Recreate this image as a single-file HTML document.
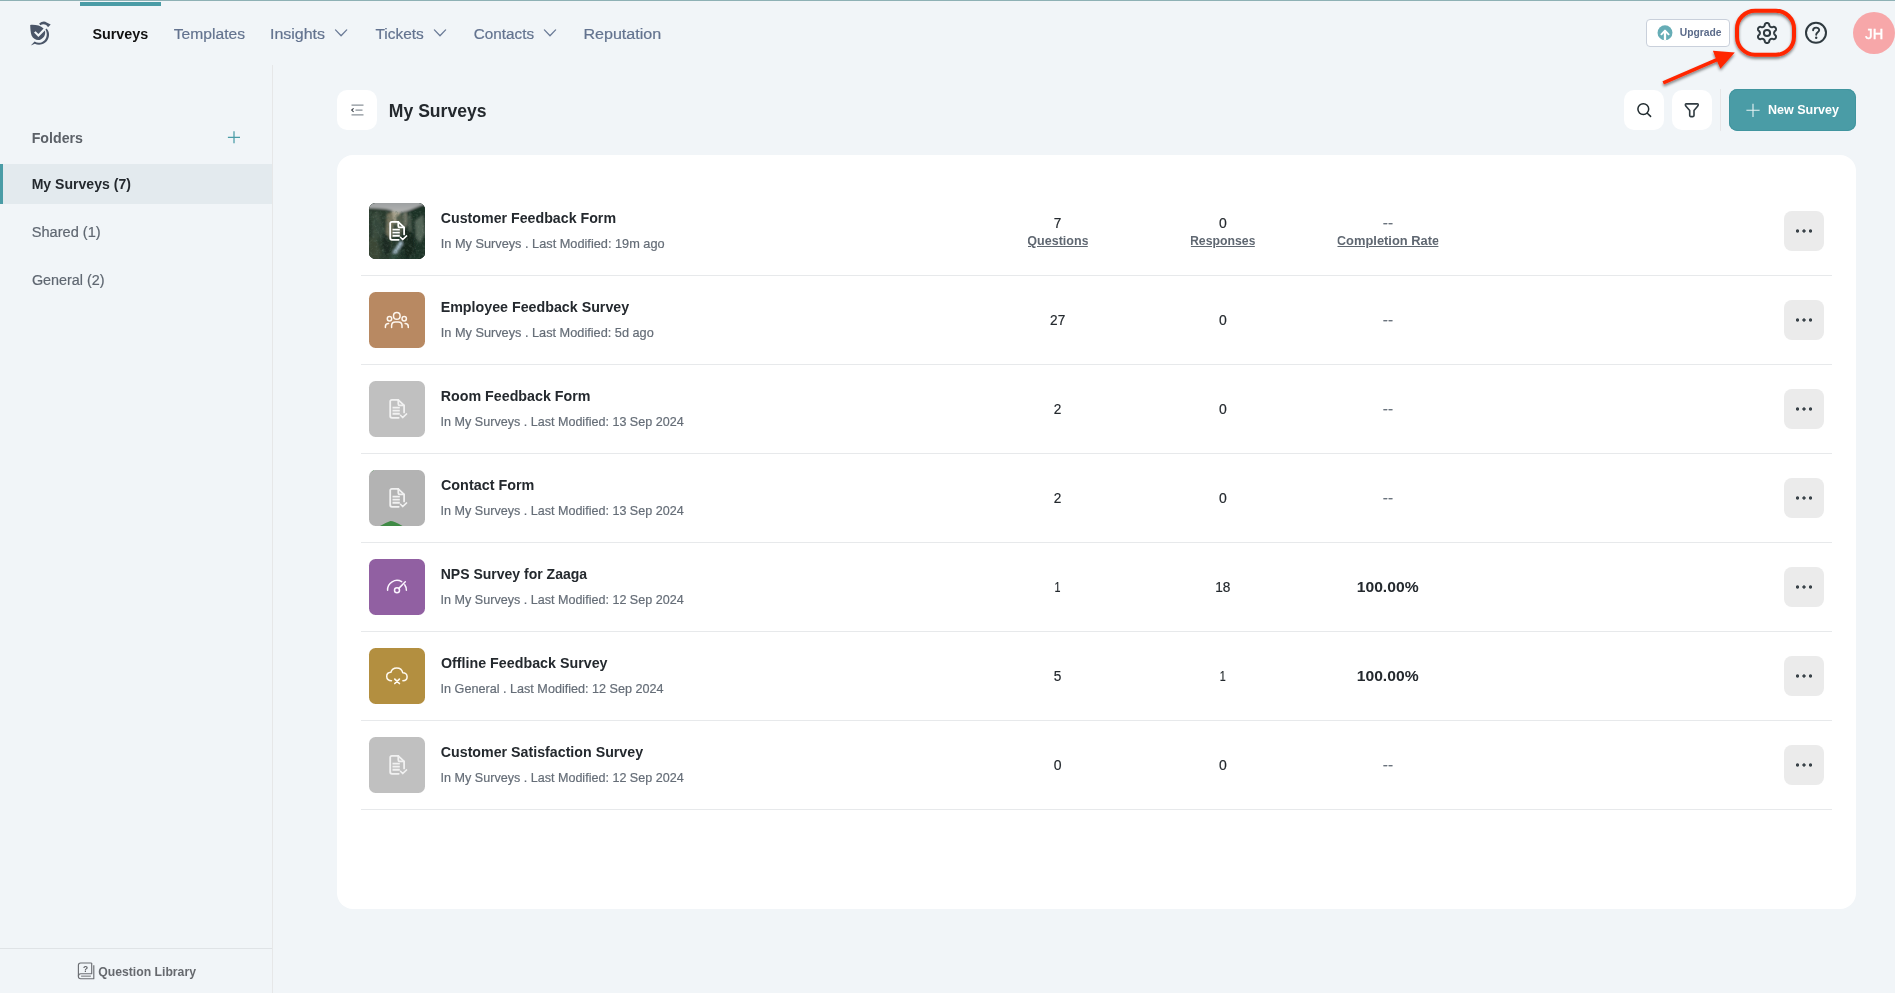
<!DOCTYPE html>
<html lang="en"><head><meta charset="utf-8"><title>My Surveys</title>
<style>
*{box-sizing:border-box;margin:0;padding:0}
html,body{width:1895px;height:993px;overflow:hidden;background:#f1f5f8;font-family:"Liberation Sans",sans-serif}
body{opacity:.999}
.abs{position:absolute}
.t{position:absolute;white-space:pre;line-height:1;transform-origin:0 50%;text-underline-offset:.5px;text-decoration-thickness:1px}
header{position:absolute;left:0;top:0;width:1895px;height:66px}
.topline{position:absolute;left:0;top:0;width:1895px;height:1px;background:#8eb1b5}
.bar{position:absolute;left:80px;top:2px;width:81px;height:4px;background:#4a9ca6}
.upg{position:absolute;left:1646px;top:19px;width:84px;height:28px;background:#fff;border:1px solid #c9d0db;border-radius:4px}
.avatar{position:absolute;left:1853px;top:12px;width:42px;height:42px;border-radius:50%;background:#f7a7a9}
aside{position:absolute;left:0;top:0;width:273px;height:993px}
aside::after{content:"";position:absolute;left:272px;top:65px;width:1px;height:928px;background:#e6e7e8}
.active{position:absolute;left:0;top:164px;width:272px;height:40px;background:#e3eaee;border-left:3px solid #4a9ca6}
.ql{position:absolute;left:0;top:948px;width:272px;height:1px;background:#dfe3e6}
.ibtn{position:absolute;top:90px;width:40px;height:40px;background:#fff;border-radius:10px}
.vdiv{position:absolute;left:1720px;top:89px;width:1px;height:42px;background:#e6e6e8}
.newbtn{position:absolute;left:1729px;top:89px;width:127px;height:42px;background:#4a9ca6;border-radius:8.5px;box-shadow:inset 0 0 0 1px #41959f}
.card{position:absolute;left:337px;top:155px;width:1519px;height:754px;background:#fff;border-radius:16px}
.tile{position:absolute;left:369px;width:56px;height:56px;border-radius:6.5px;overflow:hidden}
.more{position:absolute;left:1784px;width:40px;height:40px;border-radius:8px;background:radial-gradient(circle at 13.5px 20px,#3a4349 1.25px,rgba(58,67,73,0) 2.05px),radial-gradient(circle at 20px 20px,#3a4349 1.25px,rgba(58,67,73,0) 2.05px),radial-gradient(circle at 26.5px 20px,#3a4349 1.25px,rgba(58,67,73,0) 2.05px),#ebebeb}
.hr{position:absolute;left:361px;width:1471px;height:1px;background:#e7e9eb}
</style></head>
<body>
<header>
<div class="topline"></div>
<div class="bar"></div>
<svg class="abs" style="left:28px;top:21px" width="26" height="28" viewBox="0 0 26 28"><g fill="#4a5568">
<path d="M2.2 3.9 C7.5 3.6 12.3 4.3 15.6 7.6 L10.4 12.9 L7.6 10.2 L6 11.6 L10.4 16.1 L16.9 9.6 C18 13.6 16 17.6 11.6 18.9 C8.6 19.6 5.2 18 3.6 14.6 C2.6 11.6 2.3 7.6 2.2 3.9 Z"/>
<path d="M11.2 2.6 C13.6 0.6 16.6 -0.2 18.6 1.6 L22.7 3.5 L20 6.2 C18.6 3.4 15.6 2.4 12.2 4.2 Z"/>
<path d="M18.6 7.4 C22.6 11.6 21.6 18.6 16.6 22.1 C13.2 24.4 9.4 24.1 6.8 22.8 L2.8 24.6 L6.6 20.6 C10 22.6 14 22 16.6 19.2 C19.3 16.2 19.4 11.8 17.4 8.6 Z"/>
</g></svg>
<nav>
<span class="t" style="left:92px;top:26.00px;font-size:15.04px;font-weight:700;color:#111111;transform:translateX(0.38px) scaleX(0.9569)">Surveys</span><span class="t" style="left:173px;top:26.00px;font-size:15.04px;font-weight:400;color:#63738f;-webkit-text-stroke:.2px;transform:translateX(0.75px) scaleX(1.0402)">Templates</span><span class="t" style="left:269px;top:26.00px;font-size:15.04px;font-weight:400;color:#63738f;-webkit-text-stroke:.2px;transform:translateX(0.94px) scaleX(1.0641)">Insights</span><span class="t" style="left:375px;top:26.00px;font-size:15.04px;font-weight:400;color:#63738f;-webkit-text-stroke:.2px;transform:translateX(0.38px) scaleX(1.0297)">Tickets</span><span class="t" style="left:473px;top:26.00px;font-size:15.04px;font-weight:400;color:#63738f;-webkit-text-stroke:.2px;transform:translateX(0.78px) scaleX(1.0154)">Contacts</span><span class="t" style="left:583px;top:26.00px;font-size:15.04px;font-weight:400;color:#63738f;-webkit-text-stroke:.2px;transform:translateX(0.41px) scaleX(1.0703)">Reputation</span>
<svg class="abs" style="left:334px;top:28px" width="15" height="11" viewBox="-0.1 -0.2 15 11"><path d="M1.4 1.7 L7 7.6 L12.6 1.7" fill="none" stroke="#6b7b97" stroke-width="1.3" stroke-linecap="round" stroke-linejoin="round"/></svg><svg class="abs" style="left:433px;top:28px" width="15" height="11" viewBox="0 -0.2 15 11"><path d="M1.4 1.7 L7 7.6 L12.6 1.7" fill="none" stroke="#6b7b97" stroke-width="1.3" stroke-linecap="round" stroke-linejoin="round"/></svg><svg class="abs" style="left:543px;top:28px" width="15" height="11" viewBox="0 -0.2 15 11"><path d="M1.4 1.7 L7 7.6 L12.6 1.7" fill="none" stroke="#6b7b97" stroke-width="1.3" stroke-linecap="round" stroke-linejoin="round"/></svg>
</nav>
<div class="upg"></div>
<svg class="abs" style="left:1657px;top:25px" width="16" height="16" viewBox="-0.5 -0.3 16 16"><circle cx="7.5" cy="7.5" r="7.45" fill="#66adb6"/><path d="M7.5 15 V5.6" fill="none" stroke="#fff" stroke-width="2.3"/><path d="M3.9 9 L7.5 5.3 L11.1 9" fill="none" stroke="#fff" stroke-width="1.9" stroke-linecap="round" stroke-linejoin="round"/></svg>
<span class="t" style="left:1679px;top:27.00px;font-size:10.53px;font-weight:700;color:#5b6b8a;transform:translateX(0.71px) scaleX(0.9810)">Upgrade</span>
<svg class="abs" style="left:1755px;top:21px" width="24" height="24" viewBox="1755 21 24 24" fill="none" stroke="#2f3a40" stroke-width="2" stroke-linejoin="round"><path d="M1774.10 33.00 L1774.11 32.75 L1774.16 32.50 L1774.23 32.24 L1774.34 31.97 L1774.48 31.68 L1774.66 31.37 L1774.93 31.02 L1775.58 30.54 L1775.81 30.14 L1775.93 29.75 L1775.98 29.37 L1775.98 29.00 L1775.92 28.65 L1775.81 28.31 L1775.66 28.00 L1775.46 27.71 L1775.23 27.45 L1774.95 27.22 L1774.64 27.03 L1774.28 26.89 L1773.89 26.80 L1773.42 26.80 L1772.68 27.12 L1772.24 27.18 L1771.88 27.18 L1771.56 27.16 L1771.28 27.12 L1771.01 27.05 L1770.77 26.96 L1770.55 26.85 L1770.34 26.71 L1770.15 26.55 L1769.96 26.36 L1769.78 26.13 L1769.60 25.86 L1769.42 25.55 L1769.25 25.14 L1769.16 24.34 L1768.93 23.94 L1768.65 23.64 L1768.35 23.40 L1768.03 23.23 L1767.69 23.10 L1767.35 23.03 L1767.00 23.00 L1766.65 23.03 L1766.31 23.10 L1765.97 23.23 L1765.65 23.40 L1765.35 23.64 L1765.07 23.94 L1764.84 24.34 L1764.75 25.14 L1764.58 25.55 L1764.40 25.86 L1764.22 26.13 L1764.04 26.36 L1763.85 26.55 L1763.66 26.71 L1763.45 26.85 L1763.23 26.96 L1762.99 27.05 L1762.72 27.12 L1762.44 27.16 L1762.12 27.18 L1761.76 27.18 L1761.32 27.12 L1760.58 26.80 L1760.11 26.80 L1759.72 26.89 L1759.36 27.03 L1759.05 27.22 L1758.77 27.45 L1758.54 27.71 L1758.34 28.00 L1758.19 28.31 L1758.08 28.65 L1758.02 29.00 L1758.02 29.37 L1758.07 29.75 L1758.19 30.14 L1758.42 30.54 L1759.07 31.02 L1759.34 31.37 L1759.52 31.68 L1759.66 31.97 L1759.77 32.24 L1759.84 32.50 L1759.89 32.75 L1759.90 33.00 L1759.89 33.25 L1759.84 33.50 L1759.77 33.76 L1759.66 34.03 L1759.52 34.32 L1759.34 34.63 L1759.07 34.98 L1758.42 35.46 L1758.19 35.86 L1758.07 36.25 L1758.02 36.63 L1758.02 37.00 L1758.08 37.35 L1758.19 37.69 L1758.34 38.00 L1758.54 38.29 L1758.77 38.55 L1759.05 38.78 L1759.36 38.97 L1759.72 39.11 L1760.11 39.20 L1760.58 39.20 L1761.32 38.88 L1761.76 38.82 L1762.12 38.82 L1762.44 38.84 L1762.72 38.88 L1762.99 38.95 L1763.23 39.04 L1763.45 39.15 L1763.66 39.29 L1763.85 39.45 L1764.04 39.64 L1764.22 39.87 L1764.40 40.14 L1764.58 40.45 L1764.75 40.86 L1764.84 41.66 L1765.07 42.06 L1765.35 42.36 L1765.65 42.60 L1765.97 42.77 L1766.31 42.90 L1766.65 42.97 L1767.00 43.00 L1767.35 42.97 L1767.69 42.90 L1768.03 42.77 L1768.35 42.60 L1768.65 42.36 L1768.93 42.06 L1769.16 41.66 L1769.25 40.86 L1769.42 40.45 L1769.60 40.14 L1769.78 39.87 L1769.96 39.64 L1770.15 39.45 L1770.34 39.29 L1770.55 39.15 L1770.77 39.04 L1771.01 38.95 L1771.28 38.88 L1771.56 38.84 L1771.88 38.82 L1772.24 38.82 L1772.68 38.88 L1773.42 39.20 L1773.89 39.20 L1774.28 39.11 L1774.64 38.97 L1774.95 38.78 L1775.23 38.55 L1775.46 38.29 L1775.66 38.00 L1775.81 37.69 L1775.92 37.35 L1775.98 37.00 L1775.98 36.63 L1775.93 36.25 L1775.81 35.86 L1775.58 35.46 L1774.93 34.98 L1774.66 34.63 L1774.48 34.32 L1774.34 34.03 L1774.23 33.76 L1774.16 33.50 L1774.11 33.25 Z"/><circle cx="1767" cy="33" r="3.1"/></svg>
<svg class="abs" style="left:1804px;top:21px" width="24" height="24" viewBox="1804 21 24 24" fill="none" stroke="#2f3a40" stroke-width="2" stroke-linecap="round"><circle cx="1816" cy="32.8" r="10"/><path d="M1813.1 30.2 C1813.1 26.8 1819.2 26.8 1819.2 30.1 C1819.2 32.4 1816.2 32.3 1816.2 34.8" stroke-width="1.9"/><circle cx="1816.2" cy="37.8" r="1.2" fill="#2f3a40" stroke="none"/></svg>
<div class="avatar"></div>
<span class="t" style="left:1865px;top:27.00px;font-size:14.57px;font-weight:400;color:#ffffff;-webkit-text-stroke:0.45px #fff;transform:translateX(0.37px) scaleX(1.0001)">JH</span>
</header>

<aside>
<div class="active"></div>
<span class="t" style="left:31px;top:130.00px;font-size:15.04px;font-weight:700;color:#5c6168;transform:translateX(0.67px) scaleX(0.9448)">Folders</span><span class="t" style="left:31px;top:176.00px;font-size:15.04px;font-weight:700;color:#24292e;transform:translateX(0.66px) scaleX(0.9351)">My Surveys (7)</span><span class="t" style="left:31px;top:224.00px;font-size:15.04px;font-weight:400;color:#5f6771;-webkit-text-stroke:.2px;transform:translateX(0.76px) scaleX(0.9705)">Shared (1)</span><span class="t" style="left:31px;top:272.00px;font-size:15.04px;font-weight:400;color:#5f6771;-webkit-text-stroke:.2px;transform:translateX(0.94px) scaleX(0.9557)">General (2)</span>
<svg class="abs" style="left:227px;top:130px" width="15" height="15" viewBox="0 -0.3 15 15"><path d="M7 0.9 V13 M0.9 7 H13" stroke="#4a9ca6" stroke-width="1.25" fill="none"/></svg>
<div class="ql"></div>
<svg class="abs" style="left:77px;top:962px" width="20" height="19" viewBox="-0.3 0 20 19" fill="none" stroke="#6b6e73" stroke-width="1.15" stroke-linejoin="round"><path d="M14.4 1 H3.3 Q1.1 1 1.1 3.2 V14.5 Q1.1 16.7 3.3 16.7 H16.5 V3.2"/><path d="M14.4 1 V11.7 H3.5 Q1.1 11.7 1.1 14.2"/><path d="M3.8 14.2 H13.6" stroke="#999ca0" stroke-width="1.5"/><text x="5.7" y="9.7" font-family="Liberation Sans, sans-serif" font-size="8.4" font-weight="700" fill="#5f6267" stroke="none">?</text></svg>
<span class="t" style="left:98px;top:965.00px;font-size:13.16px;font-weight:700;color:#66696e;transform:translateX(0.22px) scaleX(0.9283)">Question Library</span>
</aside>

<main>
<div class="ibtn" style="left:337px"><svg class="abs" style="left:13px;top:13px" width="14" height="14" viewBox="0 0 14 14" fill="none" stroke="#8a9299" stroke-width="1.25"><path d="M1.5 2 H13.5 M5.5 7.1 H12.5 M1.5 11.9 H13.5"/><path d="M3.6 5.4 L1.7 7.1 L3.6 8.8" stroke="#3a4148" stroke-width="1.1"/></svg></div>
<span class="t" style="left:388px;top:102.00px;font-size:18.80px;font-weight:700;color:#24292e;transform:translateX(0.86px) scaleX(0.9356)">My Surveys</span>
<div class="ibtn" style="left:1624px"><svg class="abs" style="left:11px;top:11px" width="18" height="18" viewBox="0 0 18 18" fill="none" stroke="#1f2a2e" stroke-width="1.5" stroke-linecap="round"><circle cx="8.3" cy="8.1" r="5.4"/><path d="M12.3 12.2 L15.6 15.4"/></svg></div>
<div class="ibtn" style="left:1672px"><svg class="abs" style="left:11px;top:11px" width="18" height="18" viewBox="0 0 18 18" fill="none" stroke="#2f3a40" stroke-width="1.6" stroke-linejoin="round"><path d="M3.2 2.9 H14.4 Q15.4 2.9 15.2 4 Q15 4.9 14.4 5.5 L11 9.6 V14.6 Q11 15.6 10 15.6 H7.7 Q6.7 15.6 6.7 14.6 V9.6 L3.2 5.5 Q2.6 4.9 2.4 4 Q2.2 2.9 3.2 2.9 Z"/></svg></div>
<div class="vdiv"></div>
<div class="newbtn"><svg class="abs" style="left:17px;top:14px" width="15" height="15" viewBox="0 -0.3 15 15"><path d="M7 0.4 V13.6 M0.4 7 H13.6" stroke="#e8f3f4" stroke-width="1.1" fill="none"/></svg></div>
<span class="t" style="left:1767px;top:103.00px;font-size:13.16px;font-weight:700;color:#ffffff;transform:translateX(0.88px) scaleX(0.9525)">New Survey</span>
<section class="card"></section>
<div class="row"><div class="tile" style="top:203px;background:#2c3a33"><svg class="abs" style="left:0;top:0" width="56" height="56" viewBox="0 0 56 56"><defs><filter id="bl" x="-10%" y="-10%" width="120%" height="120%"><feGaussianBlur stdDeviation="0.8"/></filter><filter id="tx" x="0" y="0" width="100%" height="100%"><feTurbulence type="fractalNoise" baseFrequency="0.3" numOctaves="3" seed="5"/><feColorMatrix type="matrix" values="0 0 0 0 0.07  0 0 0 0 0.12  0 0 0 0 0.09  0 0 0 -2.2 1.2"/></filter><filter id="tl" x="0" y="0" width="100%" height="100%"><feTurbulence type="fractalNoise" baseFrequency="0.45" numOctaves="2" seed="9"/><feColorMatrix type="matrix" values="0 0 0 0 0.55  0 0 0 0 0.6  0 0 0 0 0.52  0 0 0 2.6 -1.45"/></filter><linearGradient id="sky" x1="0" y1="0" x2="0" y2="1"><stop offset="0" stop-color="#9a9da0"/><stop offset="1" stop-color="#b6b7b4"/></linearGradient></defs>
<rect width="56" height="56" fill="#25382d"/>
<g filter="url(#bl)">
<rect x="-2" y="-2" width="60" height="13" fill="url(#sky)"/>
<path d="M-2 5 L8 5.4 L16 6 L23 7.4 L23 60 L-2 60 Z" fill="#2a3b2f"/>
<path d="M58 1 L52 2.6 L46 5 L40 7.6 L34 9 L31 9.6 L31 60 L58 60 Z" fill="#1f3128"/>
<path d="M23 8 L31 9.5 L31 16 L27 22 L23 18 Z" fill="#a7a28d"/>
<path d="M18 11 L23 9 L25 20 L24 33 L21 36 L17 30 Z" fill="#77745f"/>
<path d="M27 13 L33 11 L35 24 L31 34 L27 28 Z" fill="#535b4c"/>
<path d="M34 10 L38 9 L38 22 L35 26 Z" fill="#747869"/>
<path d="M3 11 L10 9 L13 22 L9 36 L4 40 Z" fill="#3a4b3c"/>
<path d="M46 18 L54 12 L56 30 L51 40 L47 34 Z" fill="#56675a"/><path d="M38 14 L42 11 L43 28 L40 34 Z" fill="#46564a"/><path d="M5 14 L16 28 L18 40 L14 40 L4 20 Z" fill="#34463a"/>
<path d="M0 34 L7 36 L12 50 L9 58 L0 58 Z" fill="#3b4735"/>
<path d="M14 30 L20 34 L22 48 L16 54 L13 44 Z" fill="#1b2920"/>
<path d="M36 26 L44 30 L46 50 L38 56 L34 44 Z" fill="#15261e"/>
<path d="M31 38 L34 40 L30 46 L27 52 L22 54 L25 47 Z" fill="#a9bfcd"/>
<path d="M24 50 L30 50 L28 56 L20 56 Z" fill="#2f4a3c"/>
</g>
<rect y="8" width="56" height="48" filter="url(#tx)" opacity="0.5"/>
<rect y="9" width="56" height="47" filter="url(#tl)" opacity="0.16"/>
</svg>
<svg class="abs" style="left:20px;top:18px" width="20" height="21" viewBox="-0.3 0 20 21" fill="none" stroke="#ffffff" stroke-width="1.8" stroke-linecap="round" stroke-linejoin="round" opacity="1"><path d="M8.9 0.9 H2.6 Q0.9 0.9 0.9 2.6 V17.1 Q0.9 18.8 2.6 18.8 H9.4" /><path d="M8.9 0.9 L14.8 6.4 V13.4"/><path d="M9 1.2 V5 Q9 6.3 10.3 6.3 H14.5"/><path d="M3.2 8.6 H10.5 M3.2 11.65 H10.5 M3.2 14.7 H10.5" stroke-width="1.9" stroke-linecap="butt"/><path d="M11.2 16.3 L13.3 18.6 L17.3 14.9" stroke-width="1.5"/></svg></div><span class="t" style="left:440px;top:210.00px;font-size:15.04px;font-weight:700;color:#24292e;transform:translateX(0.78px) scaleX(0.9451)">Customer Feedback Form</span><span class="t" style="left:440px;top:237.00px;font-size:13.16px;font-weight:400;color:#656d77;-webkit-text-stroke:.2px;transform:translateX(0.73px) scaleX(0.9688)">In My Surveys . Last Modified: 19m ago</span><span class="t" style="left:1053px;top:215.00px;font-size:15.04px;font-weight:400;color:#24292e;-webkit-text-stroke:.2px;transform:translateX(0.83px) scaleX(0.9075)">7</span><span class="t" style="left:1219px;top:215.00px;font-size:15.04px;font-weight:400;color:#24292e;-webkit-text-stroke:.2px;transform:translateX(0.02px) scaleX(0.9313)">0</span><span class="t" style="left:1382px;top:215.00px;font-size:15.04px;font-weight:400;color:#6a737d;-webkit-text-stroke:.2px;transform:translateX(0.84px) scaleX(1.0184)">--</span><span class="t" style="left:1027px;top:235.00px;font-size:12.69px;font-weight:700;color:#5f6771;text-decoration:underline;clip-path:inset(0 0.84px -4px 0.65px);transform:translateX(0.35px) scaleX(0.9875)">Questions</span><span class="t" style="left:1190px;top:235.00px;font-size:12.69px;font-weight:700;color:#5f6771;text-decoration:underline;clip-path:inset(0 0.73px -4px 0.92px);transform:translateX(0.01px) scaleX(0.9675)">Responses</span><span class="t" style="left:1336px;top:235.00px;font-size:12.69px;font-weight:700;color:#5f6771;text-decoration:underline;clip-path:inset(0 0.79px -4px 0.70px);transform:translateX(0.78px) scaleX(1.0160)">Completion Rate</span><div class="more" style="top:211px"></div><div class="hr" style="top:275px"></div></div>
<div class="row"><div class="tile" style="top:292px;background:#b88962"><svg class="abs" style="left:14px;top:16px" width="28" height="24" viewBox="0 0 28 24" fill="none" stroke="#fdf6ee" stroke-width="1.5" stroke-linecap="round">
<circle cx="13.8" cy="7.9" r="3.3"/><circle cx="6.5" cy="10.8" r="2.2"/><circle cx="21.2" cy="10.8" r="2.2"/>
<path d="M8.6 19.6 V17.6 Q8.6 13.9 12.3 13.9 H15.3 Q19 13.9 19 17.6 V19.6"/>
<path d="M2.4 19.6 V18.4 Q2.4 15.6 5.6 15.5"/><path d="M25.3 19.6 V18.4 Q25.3 15.6 22.1 15.5"/></svg></div><span class="t" style="left:440px;top:299.00px;font-size:15.04px;font-weight:700;color:#24292e;transform:translateX(0.66px) scaleX(0.9480)">Employee Feedback Survey</span><span class="t" style="left:440px;top:326.00px;font-size:13.16px;font-weight:400;color:#656d77;-webkit-text-stroke:.2px;transform:translateX(0.73px) scaleX(0.9678)">In My Surveys . Last Modified: 5d ago</span><span class="t" style="left:1050px;top:312.00px;font-size:15.04px;font-weight:400;color:#24292e;-webkit-text-stroke:.2px;transform:translateX(0.06px) scaleX(0.9083)">27</span><span class="t" style="left:1219px;top:312.00px;font-size:15.04px;font-weight:400;color:#24292e;-webkit-text-stroke:.2px;transform:translateX(0.02px) scaleX(0.9313)">0</span><span class="t" style="left:1382px;top:312.00px;font-size:15.04px;font-weight:400;color:#6a737d;-webkit-text-stroke:.2px;transform:translateX(0.84px) scaleX(1.0184)">--</span><div class="more" style="top:300px"></div><div class="hr" style="top:364px"></div></div>
<div class="row"><div class="tile" style="top:381px;background:#c0c0c0"><svg class="abs" style="left:20px;top:18px" width="20" height="21" viewBox="-0.3 0 20 21" fill="none" stroke="#f1f1f1" stroke-width="1.8" stroke-linecap="round" stroke-linejoin="round" opacity="1"><path d="M8.9 0.9 H2.6 Q0.9 0.9 0.9 2.6 V17.1 Q0.9 18.8 2.6 18.8 H9.4" /><path d="M8.9 0.9 L14.8 6.4 V13.4"/><path d="M9 1.2 V5 Q9 6.3 10.3 6.3 H14.5"/><path d="M3.2 8.6 H10.5 M3.2 11.65 H10.5 M3.2 14.7 H10.5" stroke-width="1.9" stroke-linecap="butt"/><path d="M11.2 16.3 L13.3 18.6 L17.3 14.9" stroke-width="1.5"/></svg></div><span class="t" style="left:440px;top:388.00px;font-size:15.04px;font-weight:700;color:#24292e;transform:translateX(0.63px) scaleX(0.9496)">Room Feedback Form</span><span class="t" style="left:440px;top:415.00px;font-size:13.16px;font-weight:400;color:#656d77;-webkit-text-stroke:.2px;transform:translateX(0.62px) scaleX(0.9550)">In My Surveys . Last Modified: 13 Sep 2024</span><span class="t" style="left:1053px;top:401.00px;font-size:15.04px;font-weight:400;color:#24292e;-webkit-text-stroke:.2px;transform:translateX(0.77px) scaleX(0.9075)">2</span><span class="t" style="left:1219px;top:401.00px;font-size:15.04px;font-weight:400;color:#24292e;-webkit-text-stroke:.2px;transform:translateX(0.02px) scaleX(0.9313)">0</span><span class="t" style="left:1382px;top:401.00px;font-size:15.04px;font-weight:400;color:#6a737d;-webkit-text-stroke:.2px;transform:translateX(0.84px) scaleX(1.0184)">--</span><div class="more" style="top:389px"></div><div class="hr" style="top:453px"></div></div>
<div class="row"><div class="tile" style="top:470px;background:#b3b3b3"><svg class="abs" style="left:0;top:0" width="56" height="56"><path d="M11 56 Q17 52.5 21.5 51 Q25 51 33.5 56 Z" fill="#3f8a45"/><path d="M1.5 2.8 L5.5 0 L4.5 0 Z" fill="#3f8a45"/></svg><svg class="abs" style="left:20px;top:18px" width="20" height="21" viewBox="-0.3 0 20 21" fill="none" stroke="#f1f1f1" stroke-width="1.8" stroke-linecap="round" stroke-linejoin="round" opacity="1"><path d="M8.9 0.9 H2.6 Q0.9 0.9 0.9 2.6 V17.1 Q0.9 18.8 2.6 18.8 H9.4" /><path d="M8.9 0.9 L14.8 6.4 V13.4"/><path d="M9 1.2 V5 Q9 6.3 10.3 6.3 H14.5"/><path d="M3.2 8.6 H10.5 M3.2 11.65 H10.5 M3.2 14.7 H10.5" stroke-width="1.9" stroke-linecap="butt"/><path d="M11.2 16.3 L13.3 18.6 L17.3 14.9" stroke-width="1.5"/></svg></div><span class="t" style="left:440px;top:477.00px;font-size:15.04px;font-weight:700;color:#24292e;transform:translateX(0.96px) scaleX(0.9564)">Contact Form</span><span class="t" style="left:440px;top:504.00px;font-size:13.16px;font-weight:400;color:#656d77;-webkit-text-stroke:.2px;transform:translateX(0.62px) scaleX(0.9550)">In My Surveys . Last Modified: 13 Sep 2024</span><span class="t" style="left:1053px;top:490.00px;font-size:15.04px;font-weight:400;color:#24292e;-webkit-text-stroke:.2px;transform:translateX(0.77px) scaleX(0.9075)">2</span><span class="t" style="left:1219px;top:490.00px;font-size:15.04px;font-weight:400;color:#24292e;-webkit-text-stroke:.2px;transform:translateX(0.02px) scaleX(0.9313)">0</span><span class="t" style="left:1382px;top:490.00px;font-size:15.04px;font-weight:400;color:#6a737d;-webkit-text-stroke:.2px;transform:translateX(0.84px) scaleX(1.0184)">--</span><div class="more" style="top:478px"></div><div class="hr" style="top:542px"></div></div>
<div class="row"><div class="tile" style="top:559px;background:#9160a2"><svg class="abs" style="left:14px;top:16px" width="29" height="25" viewBox="-0.1 -0.6 29 25" fill="none" stroke="#fbf5ff" stroke-width="1.5" stroke-linecap="round">
<path d="M4.5 14.6 A9.4 9.4 0 0 1 18.6 6.1"/><path d="M21.6 9.2 A9.4 9.4 0 0 1 23.3 14.6"/>
<circle cx="13.9" cy="14.6" r="2.5"/><path d="M15.7 12.8 L22.2 6.2"/></svg></div><span class="t" style="left:440px;top:566.00px;font-size:15.04px;font-weight:700;color:#24292e;transform:translateX(0.67px) scaleX(0.9323)">NPS Survey for Zaaga</span><span class="t" style="left:440px;top:593.00px;font-size:13.16px;font-weight:400;color:#656d77;-webkit-text-stroke:.2px;transform:translateX(0.62px) scaleX(0.9550)">In My Surveys . Last Modified: 12 Sep 2024</span><span class="t" style="left:1054px;top:579.00px;font-size:15.04px;font-weight:400;color:#24292e;-webkit-text-stroke:.2px;transform:translateX(0.46px) scaleX(0.7164)">1</span><span class="t" style="left:1215px;top:579.00px;font-size:15.04px;font-weight:400;color:#24292e;-webkit-text-stroke:.2px;transform:translateX(0.13px) scaleX(0.9083)">18</span><span class="t" style="left:1356px;top:579.00px;font-size:15.04px;font-weight:700;color:#24292e;transform:translateX(0.74px) scaleX(1.0419)">100.00%</span><div class="more" style="top:567px"></div><div class="hr" style="top:631px"></div></div>
<div class="row"><div class="tile" style="top:648px;background:#b38f40"><svg class="abs" style="left:14px;top:13px" width="29" height="25" viewBox="-0.1 -0.1 29 25" fill="none" stroke="#fffaf0" stroke-width="1.5" stroke-linecap="round" stroke-linejoin="round">
<path d="M8.4 19.7 C5.6 19.7 3.6 17.9 3.6 15.4 C3.6 13 5.4 11.3 7.8 11.2 C8.5 8.6 10.8 6.9 13.6 6.9 C16.6 6.9 19 8.9 19.6 11.6 C22.1 11.6 24 13.3 24 15.6 C24 17.9 22.2 19.6 19.8 19.7"/>
<path d="M11.7 18 L16.3 22.4 M16.3 18 L11.7 22.4" stroke-width="1.7"/></svg></div><span class="t" style="left:440px;top:655.00px;font-size:15.04px;font-weight:700;color:#24292e;transform:translateX(0.92px) scaleX(0.9497)">Offline Feedback Survey</span><span class="t" style="left:440px;top:682.00px;font-size:13.16px;font-weight:400;color:#656d77;-webkit-text-stroke:.2px;transform:translateX(0.59px) scaleX(0.9590)">In General . Last Modified: 12 Sep 2024</span><span class="t" style="left:1053px;top:668.00px;font-size:15.04px;font-weight:400;color:#24292e;-webkit-text-stroke:.2px;transform:translateX(0.79px) scaleX(0.9075)">5</span><span class="t" style="left:1219px;top:668.00px;font-size:15.04px;font-weight:400;color:#24292e;-webkit-text-stroke:.2px;transform:translateX(0.65px) scaleX(0.7164)">1</span><span class="t" style="left:1356px;top:668.00px;font-size:15.04px;font-weight:700;color:#24292e;transform:translateX(0.74px) scaleX(1.0419)">100.00%</span><div class="more" style="top:656px"></div><div class="hr" style="top:720px"></div></div>
<div class="row"><div class="tile" style="top:737px;background:#c0c0c0"><svg class="abs" style="left:20px;top:18px" width="20" height="21" viewBox="-0.3 0 20 21" fill="none" stroke="#f1f1f1" stroke-width="1.8" stroke-linecap="round" stroke-linejoin="round" opacity="1"><path d="M8.9 0.9 H2.6 Q0.9 0.9 0.9 2.6 V17.1 Q0.9 18.8 2.6 18.8 H9.4" /><path d="M8.9 0.9 L14.8 6.4 V13.4"/><path d="M9 1.2 V5 Q9 6.3 10.3 6.3 H14.5"/><path d="M3.2 8.6 H10.5 M3.2 11.65 H10.5 M3.2 14.7 H10.5" stroke-width="1.9" stroke-linecap="butt"/><path d="M11.2 16.3 L13.3 18.6 L17.3 14.9" stroke-width="1.5"/></svg></div><span class="t" style="left:440px;top:744.00px;font-size:15.04px;font-weight:700;color:#24292e;transform:translateX(0.76px) scaleX(0.9461)">Customer Satisfaction Survey</span><span class="t" style="left:440px;top:771.00px;font-size:13.16px;font-weight:400;color:#656d77;-webkit-text-stroke:.2px;transform:translateX(0.62px) scaleX(0.9550)">In My Surveys . Last Modified: 12 Sep 2024</span><span class="t" style="left:1053px;top:757.00px;font-size:15.04px;font-weight:400;color:#24292e;-webkit-text-stroke:.2px;transform:translateX(0.78px) scaleX(0.9313)">0</span><span class="t" style="left:1219px;top:757.00px;font-size:15.04px;font-weight:400;color:#24292e;-webkit-text-stroke:.2px;transform:translateX(0.02px) scaleX(0.9313)">0</span><span class="t" style="left:1382px;top:757.00px;font-size:15.04px;font-weight:400;color:#6a737d;-webkit-text-stroke:.2px;transform:translateX(0.84px) scaleX(1.0184)">--</span><div class="more" style="top:745px"></div><div class="hr" style="top:809px"></div></div>

</main>

<svg class="abs" style="left:1640px;top:0" width="180" height="100" viewBox="1640 0 180 100">
<defs><filter id="sh" x="-20%" y="-20%" width="140%" height="150%"><feGaussianBlur in="SourceAlpha" stdDeviation="1.6"/><feOffset dx="0" dy="2.2" result="o"/><feComponentTransfer><feFuncA type="linear" slope="0.5"/></feComponentTransfer><feMerge><feMergeNode/><feMergeNode in="SourceGraphic"/></feMerge></filter></defs>
<g filter="url(#sh)">
<rect x="1737" y="10.7" width="57" height="44" rx="18" ry="18" fill="none" stroke="#ff2600" stroke-width="4"/>
<path d="M1662.5 81.3 L1715.8 58.2 L1712.9 50.8 L1734.8 52.5 L1720.4 68.8 L1717.2 61.4 L1663.9 84.4 Z" fill="#ff2600"/>
</g></svg>
</body></html>
